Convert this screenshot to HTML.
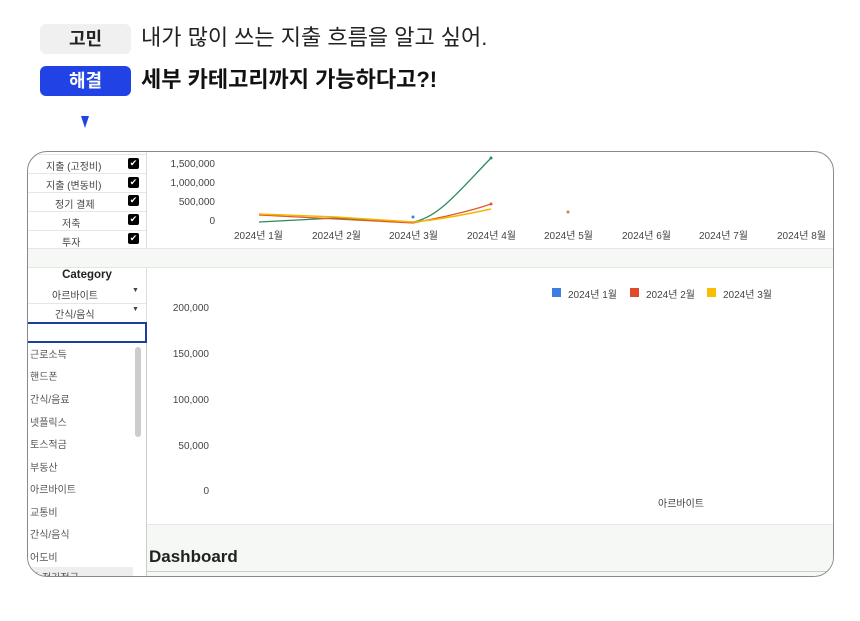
<!DOCTYPE html><html><head><meta charset="utf-8"><style>
body{margin:0;width:860px;height:621px;background:#fff;font-family:"Liberation Sans","Noto Sans CJK KR",sans-serif;position:relative;overflow:hidden}
.a{position:absolute}
.tag{position:absolute;left:40px;width:91px;height:30px;border-radius:6px;font-weight:bold;font-size:18px;text-align:center;line-height:30px}
.frame{position:absolute;left:27px;top:151px;width:805px;height:424px;border:1px solid #8a8a8a;border-radius:20px;overflow:hidden;background:#fff}
.s{font-size:10px;color:#444;position:absolute}
.cb{position:absolute;left:100px;width:11px;height:11px;background:#000;border-radius:2px;color:#fff;font-size:9px;line-height:11px;text-align:center}
.row{position:absolute;left:0;width:118px;border-bottom:1px solid #e6e6e6;height:18px}
.ax{font-size:10px;color:#444;position:absolute;text-align:right;width:60px}
.li{position:absolute;left:2px;font-size:10px;color:#555}
</style></head><body>
<div class="tag" style="top:24px;background:#f0f0f0;color:#222">고민</div>
<div class="a" style="left:141px;top:23px;font-size:22px;color:#222;line-height:30px">내가 많이 쓰는 지출 흐름을 알고 싶어.</div>
<div class="tag" style="top:66px;background:#2143e6;color:#fff">해결</div>
<div class="a" style="left:141px;top:65px;font-size:22px;font-weight:bold;color:#111;line-height:30px">세부 카테고리까지 가능하다고?!</div>
<div class="a" style="left:81px;top:116px;width:0;height:0;border-left:4px solid transparent;border-right:4px solid transparent;border-top:12px solid #2143e6"></div>
<div class="frame">
 <div class="a" style="left:118px;top:0;width:1px;height:424px;background:#ddd"></div>
 <div class="row" style="top:0;height:2px"></div>
 <div class="row" style="top:3px"><span class="s" style="left:18px;top:3px">지출 (고정비)</span></div><div class="cb" style="top:6px">✔</div>
 <div class="row" style="top:22px"><span class="s" style="left:18px;top:3px">지출 (변동비)</span></div><div class="cb" style="top:25px">✔</div>
 <div class="row" style="top:41px"><span class="s" style="left:27px;top:3px">정기 결제</span></div><div class="cb" style="top:43px">✔</div>
 <div class="row" style="top:60px"><span class="s" style="left:34px;top:3px">저축</span></div><div class="cb" style="top:62px">✔</div>
 <div class="row" style="top:79px;border:0"><span class="s" style="left:34px;top:3px">투자</span></div><div class="cb" style="top:81px">✔</div>
 <div class="ax" style="left:127px;top:7px">1,500,000</div>
 <div class="ax" style="left:127px;top:26px">1,000,000</div>
 <div class="ax" style="left:127px;top:45px">500,000</div>
 <div class="ax" style="left:127px;top:64px">0</div>
 <div class="s" style="left:206px;top:75px">2024년 1월</div><div class="s" style="left:284px;top:75px">2024년 2월</div><div class="s" style="left:361px;top:75px">2024년 3월</div><div class="s" style="left:439px;top:75px">2024년 4월</div><div class="s" style="left:516px;top:75px">2024년 5월</div><div class="s" style="left:594px;top:75px">2024년 6월</div><div class="s" style="left:671px;top:75px">2024년 7월</div><div class="s" style="left:749px;top:75px">2024년 8월</div>
 <svg class="a" style="left:0;top:0" width="805" height="100">
  <path d="M231 70 L308 66 L385 70 C410 66 430 40 463 6" stroke="#2e8b57" stroke-width="1.3" fill="none"/>
  <path d="M231 63 L308 67 L385 71 C410 66 440 60 463 52" stroke="#e05a2b" stroke-width="1.3" fill="none"/>
  <path d="M231 62 L308 65 L385 70 C410 68 440 62 463 57" stroke="#f7b500" stroke-width="1.5" fill="none"/>
  <circle cx="463" cy="6" r="1.5" fill="#2e8b57"/><circle cx="463" cy="52" r="1.5" fill="#e05a2b"/><circle cx="540" cy="60" r="1.5" fill="#e07a2b"/><circle cx="385" cy="65" r="1.5" fill="#3b7de0"/>
 </svg>
 <div class="a" style="left:0;top:96px;width:805px;height:18px;background:#f5f8f5;border-top:1px solid #e6e6e6;border-bottom:1px solid #e6e6e6"></div>
 <div class="a" style="left:0;top:117px;width:118px;text-align:center;font-size:11.5px;font-weight:bold;color:#222">Category</div>
 <div class="row" style="top:133px"><span class="s" style="left:24px;top:2px">아르바이트</span><span class="s" style="left:104px;top:2px;font-size:7px">▼</span></div>
 <div class="row" style="top:152px"><span class="s" style="left:27px;top:2px">간식/음식</span><span class="s" style="left:104px;top:2px;font-size:7px">▼</span></div>
 <div class="a" style="left:-2px;top:170px;width:117px;height:17px;border:2px solid #1b3f9e"></div>
 <div class="a" style="left:0;top:191px;width:118px;height:240px;background:#fff;border-right:1px solid #ccc"></div>
 <div class="a" style="left:107px;top:195px;width:6px;height:90px;background:#ccc;border-radius:3px"></div>
 <div class="li" style="top:194px">근로소득</div><div class="li" style="top:216px">핸드폰</div><div class="li" style="top:239px">간식/음료</div><div class="li" style="top:262px">넷플릭스</div><div class="li" style="top:284px">토스적금</div><div class="li" style="top:307px">부동산</div><div class="li" style="top:329px">아르바이트</div><div class="li" style="top:352px">교통비</div><div class="li" style="top:374px">간식/음식</div><div class="li" style="top:397px">어도비</div>
 <div class="a" style="left:0;top:415px;width:105px;height:12px;background:#eee"></div><div class="li" style="top:417px">나 정기적금</div>
 <div class="ax" style="left:121px;top:151px">200,000</div><div class="ax" style="left:121px;top:197px">150,000</div><div class="ax" style="left:121px;top:243px">100,000</div><div class="ax" style="left:121px;top:289px">50,000</div><div class="ax" style="left:121px;top:334px">0</div>
 <div class="s" style="left:630px;top:343px">아르바이트</div>
 <div class="a" style="left:524px;top:136px;width:9px;height:9px;background:#3b7de0"></div><div class="s" style="left:540px;top:134px">2024년 1월</div>
 <div class="a" style="left:602px;top:136px;width:9px;height:9px;background:#e0492b"></div><div class="s" style="left:618px;top:134px">2024년 2월</div>
 <div class="a" style="left:679px;top:136px;width:9px;height:9px;background:#fbbc04"></div><div class="s" style="left:695px;top:134px">2024년 3월</div>
 <div class="a" style="left:119px;top:372px;width:686px;height:52px;background:#f5f8f5;border-top:1px solid #e6e6e6"></div>
 <div class="a" style="left:121px;top:395px;font-size:17px;font-weight:bold;color:#222">Dashboard</div>
 <div class="a" style="left:119px;top:419px;width:686px;height:1px;background:#ccc"></div>
</div>
</body></html>
